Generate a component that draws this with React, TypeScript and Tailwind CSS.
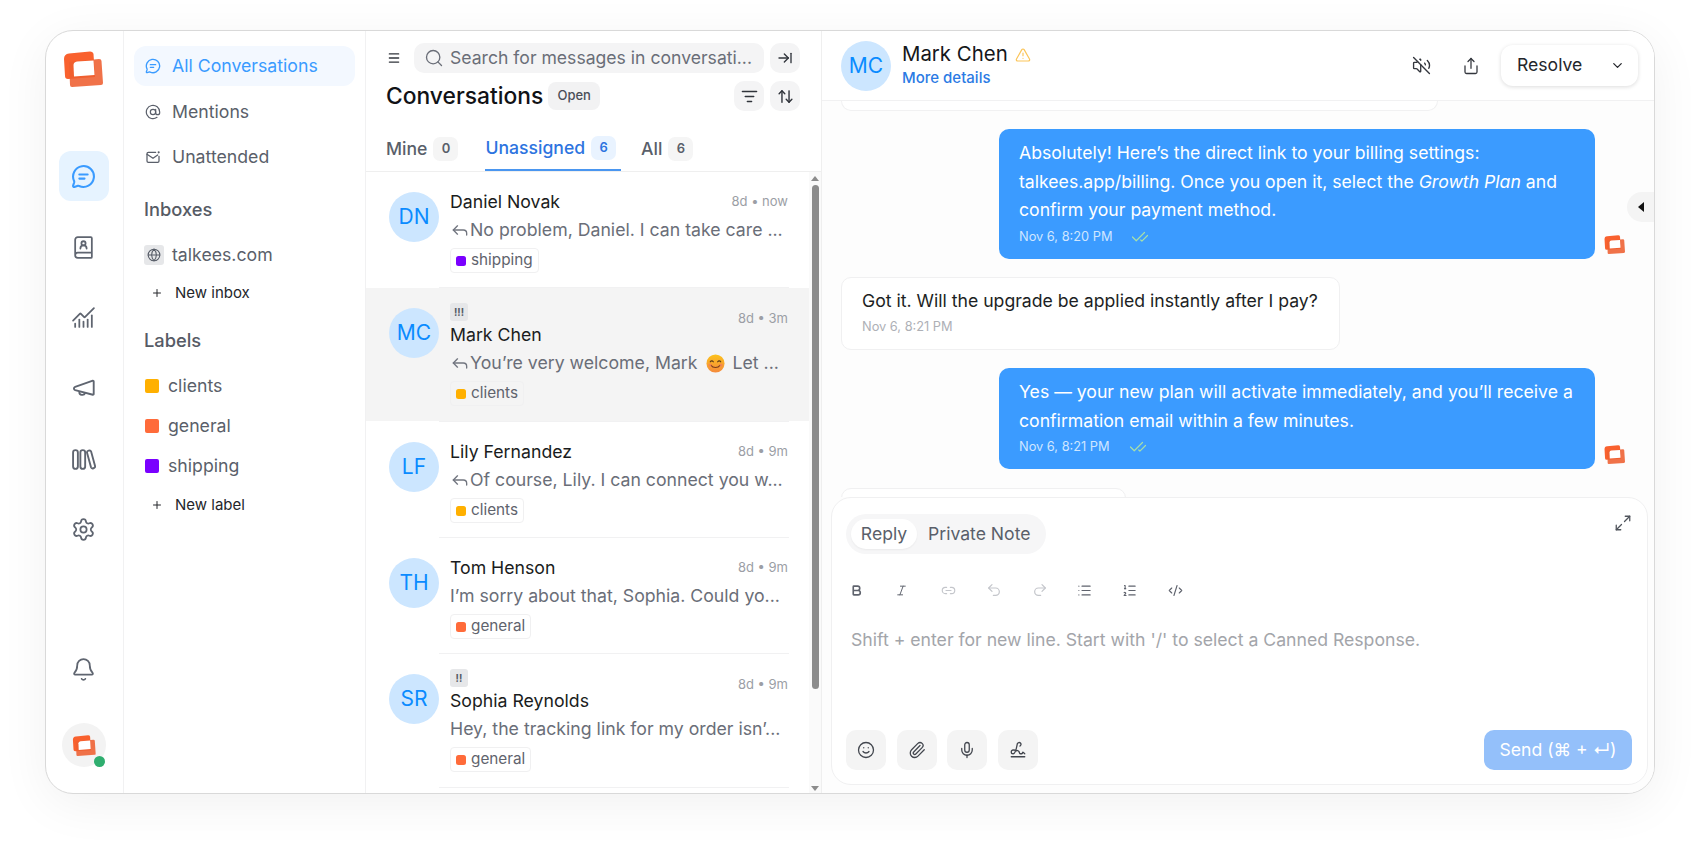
import React from "react";
import {
  MessageCircle, BookUser, ChartNoAxesCombined, Settings, Bell, AtSign, Mail, Globe, Plus, Menu, Search,
  ArrowRightToLine, ListFilter, ArrowUpDown, Reply, TriangleAlert, VolumeOff, Share, ChevronDown, Bold, Italic,
  Link2, Undo2, Redo2, List, ListOrdered, CodeXml, Smile, Paperclip, Mic, Signature, Maximize2, CheckCheck,
} from "lucide-react";

const Logo = ({ className }: { className: string }) => (
  <svg viewBox="0 0 40 36" className={className}>
    <path d="M1 8 Q1 3 6 2.5 L27 0.5 Q30 0.5 30.5 3 L32 26 L5 28 Q2 28 2 25Z" fill="#f9612e" />
    <path d="M6 11 L36 8 Q38.5 8 38.5 10 L40 32 Q40 34 38 34 L9 36 Q7 36 7 34Z" fill="#ee5f30" opacity="0.88" />
    <path d="M14 10.5 L30.5 9.5 L31.5 24 L11 25.5 L10.5 14 Q10.5 11 14 10.5Z" fill="#ffffff" />
  </svg>
);

const Chat = ({ className }: { className: string }) => (
  <MessageCircle className={className}>
    <path d="M8 10h8" />
    <path d="M8 14h5" />
  </MessageCircle>
);

const Megaphone = ({ className }: { className: string }) => (
  <svg viewBox="0 0 24 24" fill="none" stroke="currentColor" strokeWidth="1.8" strokeLinejoin="round" strokeLinecap="round" className={className}>
    <path d="M21 4.5 4 10.5c-1.6.6-1.6 2.4 0 3L21 18a.7.7 0 0 0 .8-.7V5.2a.7.7 0 0 0-.8-.7Z" />
    <path d="M8 15.5c0 3 4.5 3.5 5.5 1" />
  </svg>
);

const Books = ({ className }: { className: string }) => (
  <svg viewBox="0 0 24 24" fill="none" stroke="currentColor" strokeWidth="1.8" className={className}>
    <rect x="2" y="3" width="4.6" height="18" rx="2.3" />
    <rect x="9" y="3" width="4.6" height="18" rx="2.3" />
    <path d="M15.4 5.5c-.5-1.8 3.2-3 3.9-1.2l3.8 14c.5 2-3.2 3.2-3.9 1.2Z" />
  </svg>
);

const Unattended = ({ className }: { className: string }) => (
  <svg viewBox="0 0 24 24" fill="none" stroke="currentColor" strokeWidth="1.9" strokeLinecap="round" strokeLinejoin="round" className={className}>
    <path d="M16 5H5a2 2 0 0 0-2 2v11a2 2 0 0 0 2 2h14a2 2 0 0 0 2-2v-7" />
    <path d="m3 8 9 6 7-5" />
    <circle cx="20.5" cy="5" r="1.6" fill="currentColor" stroke="none" />
  </svg>
);

const Emoji = () => (
  <svg viewBox="0 0 20 20" className="w-[19px] h-[19px] mx-[8px] shrink-0">
    <defs>
      <linearGradient id="em" x1="0" y1="0" x2="0" y2="1">
        <stop offset="0" stopColor="#fcc21b" />
        <stop offset="1" stopColor="#f58a3c" />
      </linearGradient>
    </defs>
    <circle cx="10" cy="10" r="9.5" fill="url(#em)" />
    <path d="M4.5 8.2c.8-1.2 2.4-1.2 3.2 0M12.3 8.2c.8-1.2 2.4-1.2 3.2 0" fill="none" stroke="#5b3a1a" strokeWidth="1.2" strokeLinecap="round" />
    <path d="M5.5 12c1.5 3 7.5 3 9 0" fill="none" stroke="#7a3b1d" strokeWidth="1.2" strokeLinecap="round" />
    <circle cx="4.2" cy="11.5" r="1.6" fill="#f0736a" opacity="0.6" />
    <circle cx="15.8" cy="11.5" r="1.6" fill="#f0736a" opacity="0.6" />
  </svg>
);

const railIcon = "w-[25px] h-[25px] text-[#5f6570]";

const RailSpot = ({ children, active, mt }: { children: React.ReactNode; active?: boolean; mt: string }) => (
  <div className={`w-[50px] h-[50px] flex items-center justify-center rounded-[12px] ${mt} ${active ? "bg-[#e6f3ff]" : ""}`}>
    {children}
  </div>
);

const Rail = () => (
  <div className="w-[78px] shrink-0 border-r border-[#f1f1f2] flex flex-col items-center pr-[2px]">
    <Logo className="w-[40px] h-[36px] mt-[20px] mr-[2px] shrink-0" />
    <RailSpot active mt="mt-[64px]"><Chat className="w-[25px] h-[25px] text-[#3a9bff]" /></RailSpot>
    <RailSpot mt="mt-[21px]"><BookUser className={railIcon} strokeWidth={1.7} /></RailSpot>
    <RailSpot mt="mt-[20px]"><ChartNoAxesCombined className={railIcon} strokeWidth={1.7} /></RailSpot>
    <RailSpot mt="mt-[21px]"><Megaphone className={railIcon} /></RailSpot>
    <RailSpot mt="mt-[21px]"><Books className={railIcon} /></RailSpot>
    <RailSpot mt="mt-[20px]"><Settings className={railIcon} strokeWidth={1.7} /></RailSpot>
    <RailSpot mt="mt-[90px]"><Bell className={railIcon} strokeWidth={1.7} /></RailSpot>
    <div className="relative w-[44px] h-[44px] rounded-full bg-[#f3f3f3] flex items-center justify-center mt-[29px]">
      <Logo className="w-[24px] h-[21px]" />
      <span className="absolute right-[1px] bottom-[0px] w-[11px] h-[11px] rounded-full bg-[#2fae6f]" />
    </div>
  </div>
);

const NavItem = ({ icon, label, active, mt }: { icon: React.ReactNode; label: string; active?: boolean; mt: string }) => (
  <div className={`h-[40px] mx-[10px] rounded-[12px] flex items-center pl-[11px] gap-[11px] text-[17.7px] ${mt} ${active ? "bg-[#f3f8ff] text-[#3a9bff]" : "text-[#5a5f6a]"}`}>
    {icon}
    <span>{label}</span>
  </div>
);

const Section = ({ label, mt }: { label: string; mt: string }) => (
  <div className={`ml-[20px] text-[18.3px] font-medium text-[#565b65] leading-[24px] ${mt}`}>{label}</div>
);

const NewItem = ({ label, mt }: { label: string; mt: string }) => (
  <div className={`ml-[27px] flex items-center gap-[12px] text-[15px] text-[#24262b] leading-[20px] ${mt}`}>
    <Plus className="w-[12px] h-[12px]" strokeWidth={2} />
    <span>{label}</span>
  </div>
);

const LabelItem = ({ color, label, mt }: { color: string; label: string; mt: string }) => (
  <div className={`ml-[21px] flex items-center gap-[9px] text-[17.7px] text-[#5a5f6a] leading-[24px] ${mt}`}>
    <span className={`w-[14px] h-[14px] rounded-[2px] ${color}`} />
    <span>{label}</span>
  </div>
);

const Sidebar = () => (
  <div className="w-[242px] shrink-0 border-r border-[#f1f1f2]">
    <NavItem active mt="mt-[15px]" label="All Conversations" icon={<Chat className="w-[16px] h-[16px]" />} />
    <NavItem mt="mt-[6px]" label="Mentions" icon={<AtSign className="w-[16px] h-[16px]" strokeWidth={1.8} />} />
    <NavItem mt="mt-[5px]" label="Unattended" icon={<Unattended className="w-[16px] h-[16px]" />} />
    <Section label="Inboxes" mt="mt-[20px]" />
    <div className="ml-[20px] mt-[22px] flex items-center gap-[8px] text-[17.7px] text-[#5a5f6a] leading-[24px]">
      <span className="w-[20px] h-[20px] rounded-[3px] bg-[#e6e7e9] flex items-center justify-center">
        <Globe className="w-[14px] h-[14px] text-[#555b66]" strokeWidth={1.8} />
      </span>
      <span>talkees.com</span>
    </div>
    <NewItem label="New inbox" mt="mt-[16px]" />
    <Section label="Labels" mt="mt-[25px]" />
    <LabelItem color="bg-[#ffb000]" label="clients" mt="mt-[22px]" />
    <LabelItem color="bg-[#ff6b3a]" label="general" mt="mt-[16px]" />
    <LabelItem color="bg-[#7a00ff]" label="shipping" mt="mt-[16px]" />
    <NewItem label="New label" mt="mt-[17px]" />
  </div>
);

const Square = ({ children, className = "" }: { children: React.ReactNode; className?: string }) => (
  <div className={`w-[30px] h-[30px] rounded-[10px] bg-[#f4f4f5] flex items-center justify-center text-[#30343b] ${className}`}>{children}</div>
);

const Tab = ({ label, count, active, ml }: { label: string; count: string; active?: boolean; ml: string }) => (
  <div className={`flex items-center gap-[6px] h-[35px] pb-[9px] pr-[5px] ${ml} ${active ? "border-b-2 border-[#4a96f0] text-[#2d74e0]" : "text-[#5a5f6a]"}`}>
    <span className="text-[17.6px] font-medium leading-[24px]">{label}</span>
    <span className={`w-[25px] h-[24px] rounded-[7px] flex items-center justify-center text-[13px] font-semibold ${active ? "bg-[#e9f3ff] text-[#2d74e0]" : "bg-[#f5f5f5] text-[#5a5f6a]"}`}>{count}</span>
  </div>
);

const rows = [
  { i: "DN", n: "Daniel Novak", t: "8d • now", r: true, p: "No problem, Daniel. I can take care ...", c: "bg-[#7a00ff]", l: "shipping" },
  { i: "MC", n: "Mark Chen", t: "8d • 3m", r: true, p: "You’re very welcome, Mark", e: " Let ...", c: "bg-[#ffb000]", l: "clients", u: "!!!", sel: true },
  { i: "LF", n: "Lily Fernandez", t: "8d • 9m", r: true, p: "Of course, Lily. I can connect you w...", c: "bg-[#ffb000]", l: "clients" },
  { i: "TH", n: "Tom Henson", t: "8d • 9m", r: false, p: "I’m sorry about that, Sophia. Could yo...", c: "bg-[#ff6b3a]", l: "general" },
  { i: "SR", n: "Sophia Reynolds", t: "8d • 9m", r: false, p: "Hey, the tracking link for my order isn’...", c: "bg-[#ff6b3a]", l: "general", u: "!!" },
];

type RowT = (typeof rows)[number] & { e?: string; u?: string; sel?: boolean };

const Avatar = ({ t, className = "" }: { t: string; className?: string }) => (
  <div className={`w-[50px] h-[50px] rounded-full bg-[#cce6ff] text-[#0a8bff] flex items-center justify-center text-[21px] shrink-0 ${className}`}>{t}</div>
);

const Row = ({ row }: { row: RowT }) => (
  <div>
    <div className={`flex pl-[23px] pr-[21px] ${row.u ? "h-[133px]" : "h-[115px]"} ${row.sel ? "bg-[#f4f4f4]" : ""}`}>
      <Avatar t={row.i} className="mt-[20px]" />
      <div className={`ml-[11px] flex-1 min-w-0 ${row.u ? "pt-[15px]" : "pt-[20px]"}`}>
        {row.u && (
          <div className="flex justify-between h-[22px]">
            <span className="w-[18px] h-[18px] rounded-[3px] bg-[#e6e7e9] text-[#555b66] text-[10px] font-bold flex items-center justify-center">{row.u}</span>
            <span className="text-[13px] text-[#9b9ea5] leading-[20px] mt-[5px]">{row.t}</span>
          </div>
        )}
        <div className="flex justify-between items-center h-[20px]">
          <span className="text-[17.7px] text-[#1a1c20] whitespace-nowrap">{row.n}</span>
          {!row.u && <span className="text-[13px] text-[#9b9ea5]">{row.t}</span>}
        </div>
        <div className="flex items-center h-[24px] mt-[6px] text-[17.7px] text-[#6a6e78] whitespace-nowrap overflow-hidden">
          {row.r && <Reply className="w-[20px] h-[20px] text-[#71757f] shrink-0" strokeWidth={1.6} />}
          <span>{row.p}</span>
          {row.e && <Emoji />}
          {row.e && <span>{row.e.trim()}</span>}
        </div>
        <div className={`inline-flex items-center h-[25px] mt-[6px] pl-[5px] pr-[5px] gap-[5px] rounded-[4px] border border-[#f0f0f1] text-[15.3px] text-[#5f636d] ${row.sel ? "" : "bg-white"}`}>
          <span className={`w-[10px] h-[10px] rounded-[2.5px] ${row.c}`} />
          <span>{row.l}</span>
        </div>
      </div>
    </div>
    <div className="ml-[73px] mr-[20px] h-px bg-[#f1f1f2]" />
  </div>
);

const ConversationList = () => (
  <div className="w-[456px] shrink-0 border-r border-[#efefef] flex flex-col h-full">
    <div className="flex items-center h-[30px] mt-[12px] pl-[21px] pr-[21px]">
      <Menu className="w-[14px] h-[14px] text-[#30343b]" strokeWidth={2.2} />
      <div className="ml-[13px] flex-1 h-[30px] rounded-[10px] bg-[#f4f4f5] flex items-center pl-[10px] text-[17.6px] text-[#6a6e78] whitespace-nowrap overflow-hidden">
        <Search className="w-[20px] h-[20px] mr-[6px] shrink-0" strokeWidth={1.6} />
        <span className="pt-[1px]">Search for messages in conversati...</span>
      </div>
      <Square className="ml-[6px]"><ArrowRightToLine className="w-[16px] h-[16px]" /></Square>
    </div>
    <div className="flex items-center h-[30px] mt-[8px] pl-[20px] pr-[21px]">
      <span className="text-[22.8px] font-medium text-[#111216] leading-[30px]">Conversations</span>
      <span className="ml-[5px] w-[52px] h-[28px] rounded-[8px] bg-[#f2f2f3] text-[13px] font-medium text-[#4a4e57] flex items-center justify-center">Open</span>
      <Square className="ml-auto"><ListFilter className="w-[17px] h-[17px]" strokeWidth={2} /></Square>
      <Square className="ml-[6px]"><ArrowUpDown className="w-[17px] h-[17px]" strokeWidth={2} /></Square>
    </div>
    <div className="flex items-end h-[36px] mt-[25px] pl-[20px] border-b border-[#efefef] shrink-0">
      <Tab label="Mine" count="0" ml="" />
      <Tab active label="Unassigned" count="6" ml="ml-[22px]" />
      <Tab label="All" count="6" ml="ml-[20px]" />
    </div>
    <div className="flex flex-1 min-h-0">
      <div className="flex-1 min-w-0 overflow-hidden">
        {(rows as RowT[]).map((r) => <Row key={r.i} row={r} />)}
      </div>
      <div className="w-[12px] shrink-0 bg-[#fafafa] flex flex-col items-center pt-[4px] pb-[2px]">
        <span className="w-0 h-0 border-x-[4px] border-x-transparent border-b-[5px] border-b-[#8c8c8c]" />
        <span className="w-[7px] h-[504px] rounded-full bg-[#8c8c8c] mt-[4px]" />
        <span className="w-0 h-0 border-x-[4px] border-x-transparent border-t-[5px] border-t-[#8c8c8c] mt-auto" />
      </div>
    </div>
  </div>
);

const Time = ({ text, ml }: { text: string; ml: string }) => (
  <div className="flex items-center h-[24px]">
    <span className="text-[12.8px] text-[#cfe6ff]">{text}</span>
    <CheckCheck className={`w-[18px] h-[18px] text-[#a8e0a8] ${ml}`} strokeWidth={1.6} />
  </div>
);

const Out = ({ children }: { children: React.ReactNode }) => (
  <div className="flex items-end pr-[29px] justify-end">
    <div className="w-[596px] rounded-[10px] bg-[#3b9bff] text-white text-[17.65px] leading-[28.5px] px-[20px] pt-[10px] pb-[10px]">{children}</div>
    <Logo className="w-[21px] h-[19px] ml-[9px] mb-[5px]" />
  </div>
);

const Tool = ({ children, dim }: { children: React.ReactNode; dim?: boolean }) => (
  <div className={`w-[45.4px] flex justify-start ${dim ? "text-[#c4c6cb]" : "text-[#5f636d]"}`}>{children}</div>
);

const Action = ({ children }: { children: React.ReactNode }) => (
  <div className="w-[40px] h-[40px] rounded-[10px] bg-[#f4f4f4] flex items-center justify-center text-[#42464e]">{children}</div>
);

const ChatPane = () => (
  <div className="relative flex-1 min-w-0 flex flex-col bg-[#fdfdfd] h-full">
    <div className="h-[70px] shrink-0 bg-white border-b border-[#f1f1f2] flex items-center pl-[19px] pr-[16px]">
      <Avatar t="MC" className="bg-[#cce6ff]" />
      <div className="ml-[11px] -mt-[2px]">
        <div className="flex items-center gap-[7px] h-[26px]">
          <span className="text-[20.4px] text-[#15171b]">Mark Chen</span>
          <TriangleAlert className="w-[16px] h-[16px] text-[#fbc55a]" strokeWidth={1.8} />
        </div>
        <div className="text-[15px] font-medium text-[#2b7be4] leading-[20px]">More details</div>
      </div>
      <VolumeOff className="ml-auto w-[19px] h-[19px] text-[#33363d]" strokeWidth={1.7} />
      <Share className="ml-[31px] w-[18px] h-[18px] text-[#33363d]" strokeWidth={1.7} />
      <div className="ml-[21px] w-[137px] h-[41px] rounded-[12px] bg-white shadow-[0_1px_4px_rgba(0,0,0,0.14)] flex items-center justify-between pl-[16px] pr-[13px] text-[17.6px] text-[#24262b]">
        <span>Resolve</span>
        <ChevronDown className="w-[15px] h-[15px]" strokeWidth={2} />
      </div>
    </div>

    <div className="flex-1 min-h-0 overflow-hidden flex flex-col pl-[19px]">
      <div className="w-[597px] h-[10px] shrink-0 bg-white border border-t-0 border-[#f1f1f2] rounded-b-[10px]" />
      <div className="mt-[18px] shrink-0">
        <Out>
          <div>Absolutely! Here’s the direct link to your billing settings:</div>
          <div>talkees.app/billing. Once you open it, select the <em>Growth Plan</em> and</div>
          <div>confirm your payment method.</div>
          <div className="mt-[0.5px]"><Time text="Nov 6, 8:20 PM" ml="ml-[19px]" /></div>
        </Out>
      </div>
      <div className="mt-[18px] w-[499px] h-[73px] shrink-0 bg-white border border-[#f0f0f1] rounded-[10px] pl-[20px] pt-[9px]">
        <div className="text-[17.65px] leading-[28px] text-[#1d1f24]">Got it. Will the upgrade be applied instantly after I pay?</div>
        <div className="text-[12.8px] leading-[24px] text-[#aeb0b6]">Nov 6, 8:21 PM</div>
      </div>
      <div className="mt-[18px] shrink-0">
        <Out>
          <div>Yes — your new plan will activate immediately, and you’ll receive a</div>
          <div>confirmation email within a few minutes.</div>
          <Time text="Nov 6, 8:21 PM" ml="ml-[19px]" />
        </Out>
      </div>
      <div className="mt-[19px] w-[285px] h-[40px] shrink-0 bg-white border border-[#f0f0f1] rounded-[10px]" />
    </div>

    <div className="ml-[9px] mr-[6px] mb-[8px] h-[288px] shrink-0 rounded-[20px] bg-white border border-[#f0f0f1] flex flex-col pl-[14px] pr-[15px]">
      <div className="flex items-start mt-[16px]">
        <div className="w-[200px] h-[40px] rounded-full bg-[#f6f6f7] flex items-center pl-[5px] text-[17.6px] text-[#5a5f6a]">
          <span className="w-[66px] h-[30px] rounded-full bg-white shadow-[0_1px_2px_rgba(0,0,0,0.05)] flex items-center justify-center">Reply</span>
          <span className="ml-[11px] whitespace-nowrap">Private Note</span>
        </div>
        <Maximize2 className="ml-auto mt-[0px] mr-[0px] w-[18px] h-[18px] text-[#50545c]" strokeWidth={1.7} />
      </div>
      <div className="flex items-center h-[16px] mt-[28px] pl-[4px]">
        <Tool><Bold className="w-[13px] h-[13px]" strokeWidth={3} /></Tool>
        <Tool><Italic className="w-[13px] h-[13px]" strokeWidth={1.8} /></Tool>
        <Tool dim><Link2 className="w-[15px] h-[15px]" strokeWidth={1.8} /></Tool>
        <Tool dim><Undo2 className="w-[16px] h-[16px]" strokeWidth={1.8} /></Tool>
        <Tool dim><Redo2 className="w-[16px] h-[16px]" strokeWidth={1.8} /></Tool>
        <Tool><List className="w-[15px] h-[15px]" strokeWidth={1.8} /></Tool>
        <Tool><ListOrdered className="w-[15px] h-[15px]" strokeWidth={1.8} /></Tool>
        <Tool><CodeXml className="w-[15px] h-[15px]" strokeWidth={1.8} /></Tool>
      </div>
      <div className="mt-[30px] ml-[5px] text-[17.65px] leading-[24px] text-[#a3a5aa]">Shift + enter for new line. Start with '/' to select a Canned Response.</div>
      <div className="mt-auto mb-[14px] flex items-center gap-[10.5px]">
        <Action><Smile className="w-[18px] h-[18px]" strokeWidth={1.7} /></Action>
        <Action><Paperclip className="w-[18px] h-[18px]" strokeWidth={1.7} /></Action>
        <Action><Mic className="w-[18px] h-[18px]" strokeWidth={1.7} /></Action>
        <Action><Signature className="w-[18px] h-[18px]" strokeWidth={1.7} /></Action>
        <div className="ml-auto w-[148px] h-[40px] rounded-[10px] bg-[#94c0fa] text-white text-[17.6px] flex items-center justify-center whitespace-nowrap">Send (⌘ + ↵)</div>
      </div>
    </div>

    <div className="absolute right-0 top-[161px] w-[27px] h-[30px] rounded-l-full bg-[#f4f4f4] flex items-center justify-center">
      <span className="w-0 h-0 border-y-[5px] border-y-transparent border-r-[6px] border-r-[#111]" />
    </div>
  </div>
);

export default function App() {
  return (
    <div className="w-[1701px] h-[855px] bg-white pt-[30px] pl-[45px] overflow-hidden" style={{ fontFamily: "Inter, 'DejaVu Sans', sans-serif" }}>
      <div className="w-[1610px] h-[764px] rounded-[28px] border border-[#d9d9d9] bg-white overflow-hidden flex shadow-[0_10px_50px_rgba(0,0,0,0.06)]">
        <Rail />
        <Sidebar />
        <ConversationList />
        <ChatPane />
      </div>
    </div>
  );
}
